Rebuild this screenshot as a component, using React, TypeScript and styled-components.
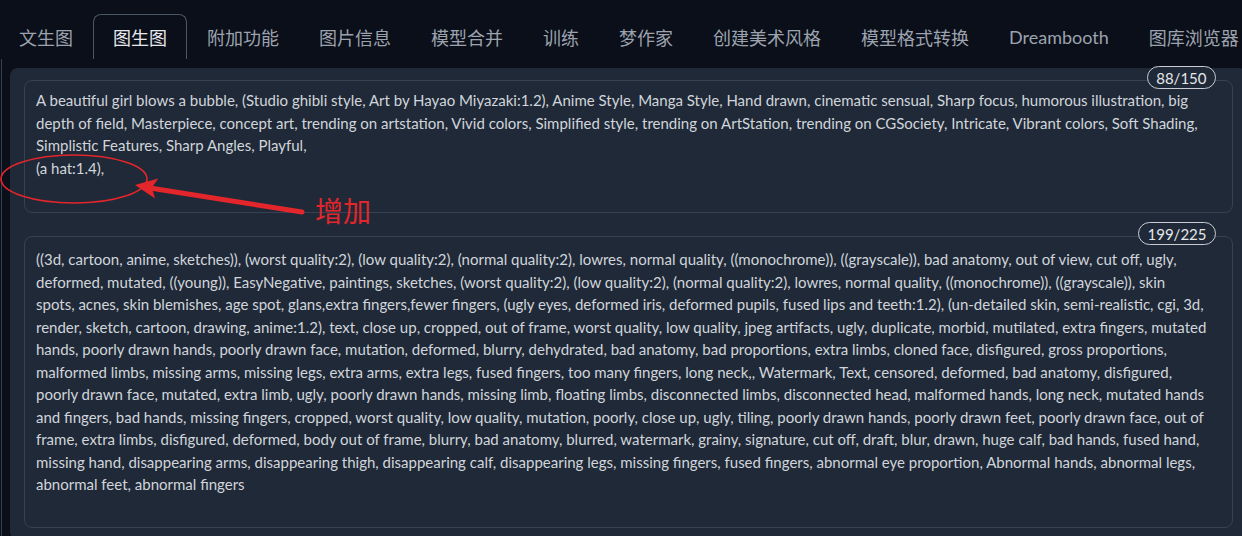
import * as React from 'react'
import styled, { createGlobalStyle } from 'styled-components'

const GlobalStyle = createGlobalStyle`
  html, body {
    margin: 0;
    padding: 0;
    background-color: #0b0f19;
    overflow: hidden;
  }
  body {
    font-family: Lato, "Noto Sans CJK SC", sans-serif;
  }
`

const Page = styled.div`
  position: relative;
  width: 1262px;
`

const TabNav = styled.div`
  display: flex;
  padding-top: 14px;
  margin-left: -1px;
  border-bottom: 1px solid #374151;
`

const TabButton = styled.button<{ $active?: boolean }>`
  height: 45px;
  margin-bottom: -1px;
  padding: 0 19px;
  font-family: Lato, "Noto Sans CJK SC", sans-serif;
  font-size: 18px;
  white-space: nowrap;
  color: ${(p) => (p.$active ? '#e5e7eb' : '#9ca3af')};
  background-color: #0b0f19;
  border: 1px solid ${(p) => (p.$active ? '#4b5563' : 'transparent')};
  border-bottom: none;
  border-radius: 8px 8px 0 0;
  cursor: pointer;
`

const TabContent = styled.div`
  margin-left: 1px;
  padding: 9px 0 0 8px;
  border-left: 1px solid #374151;
`

const Panel = styled.div`
  display: flex;
  flex-direction: column;
  gap: 23px;
  width: 1237px;
  padding: 12px 14px;
  box-sizing: border-box;
  background-color: #1f2937;
  border-radius: 8px;
`

const TextBlock = styled.div`
  position: relative;
`

const Counter = styled.span`
  position: absolute;
  top: -14px;
  right: 17px;
  height: 23px;
  padding: 0 8.5px;
  box-sizing: border-box;
  display: flex;
  align-items: center;
  font-size: 15px;
  color: #e5e7eb;
  background-color: #1f2937;
  border: 1px solid #c9cdd3;
  border-radius: 12px;
`

const PromptArea = styled.textarea<{ $height: number; $padTop: number }>`
  display: block;
  width: 100%;
  height: ${(p) => p.$height}px;
  box-sizing: border-box;
  padding: ${(p) => p.$padTop}px 11px 8px;
  font-family: Lato, "Noto Sans CJK SC", sans-serif;
  font-size: 15px;
  line-height: 22.5px;
  color: #d1d5db;
  background-color: #1f2937;
  border: 1px solid #374151;
  border-radius: 8px;
  resize: none;
  overflow: hidden;
  outline: none;
`

const Markup = styled.svg`
  position: absolute;
  left: 0;
  top: 0;
  pointer-events: none;
`

const MarkupLabel = styled.span`
  position: absolute;
  left: 315px;
  top: 196px;
  font-family: "Noto Sans CJK SC", sans-serif;
  font-size: 28px;
  line-height: 28px;
  color: #e3262b;
`

const tabs = [
  '文生图',
  '图生图',
  '附加功能',
  '图片信息',
  '模型合并',
  '训练',
  '梦作家',
  '创建美术风格',
  '模型格式转换',
  'Dreambooth',
  '图库浏览器',
]

const prompt = [
  'A beautiful girl blows a bubble, (Studio ghibli style, Art by Hayao Miyazaki:1.2), Anime Style, Manga Style, Hand drawn, cinematic sensual, Sharp focus, humorous illustration, big',
  'depth of field, Masterpiece, concept art, trending on artstation, Vivid colors, Simplified style, trending on ArtStation, trending on CGSociety, Intricate, Vibrant colors, Soft Shading,',
  'Simplistic Features, Sharp Angles, Playful,',
  '(a hat:1.4),',
].join('\n')

const negative = [
  '((3d, cartoon, anime, sketches)), (worst quality:2), (low quality:2), (normal quality:2), lowres, normal quality, ((monochrome)), ((grayscale)), bad anatomy, out of view, cut off, ugly,',
  'deformed, mutated, ((young)), EasyNegative, paintings, sketches, (worst quality:2), (low quality:2), (normal quality:2), lowres, normal quality, ((monochrome)), ((grayscale)), skin',
  'spots, acnes, skin blemishes, age spot, glans,extra fingers,fewer fingers, (ugly eyes, deformed iris, deformed pupils, fused lips and teeth:1.2), (un-detailed skin, semi-realistic, cgi, 3d,',
  'render, sketch, cartoon, drawing, anime:1.2), text, close up, cropped, out of frame, worst quality, low quality, jpeg artifacts, ugly, duplicate, morbid, mutilated, extra fingers, mutated',
  'hands, poorly drawn hands, poorly drawn face, mutation, deformed, blurry, dehydrated, bad anatomy, bad proportions, extra limbs, cloned face, disfigured, gross proportions,',
  'malformed limbs, missing arms, missing legs, extra arms, extra legs, fused fingers, too many fingers, long neck,, Watermark, Text, censored, deformed, bad anatomy, disfigured,',
  'poorly drawn face, mutated, extra limb, ugly, poorly drawn hands, missing limb, floating limbs, disconnected limbs, disconnected head, malformed hands, long neck, mutated hands',
  'and fingers, bad hands, missing fingers, cropped, worst quality, low quality, mutation, poorly, close up, ugly, tiling, poorly drawn hands, poorly drawn feet, poorly drawn face, out of',
  'frame, extra limbs, disfigured, deformed, body out of frame, blurry, bad anatomy, blurred, watermark, grainy, signature, cut off, draft, blur, drawn, huge calf, bad hands, fused hand,',
  'missing hand, disappearing arms, disappearing thigh, disappearing calf, disappearing legs, missing fingers, fused fingers, abnormal eye proportion, Abnormal hands, abnormal legs,',
  'abnormal feet, abnormal fingers',
].join('\n')

export default function App() {
  return (
    <>
      <GlobalStyle />
      <Page>
        <TabNav>
          {tabs.map((t) => (
            <TabButton key={t} $active={t === '图生图'}>
              {t}
            </TabButton>
          ))}
        </TabNav>
        <TabContent>
          <Panel>
            <TextBlock>
              <Counter>88/150</Counter>
              <PromptArea $height={133} $padTop={8} wrap="off" spellCheck={false} readOnly value={prompt} />
            </TextBlock>
            <TextBlock>
              <Counter>199/225</Counter>
              <PromptArea $height={292} $padTop={11} wrap="off" spellCheck={false} readOnly value={negative} />
            </TextBlock>
          </Panel>
        </TabContent>

        {/* red hand-drawn note over the first prompt */}
        <Markup width="320" height="230" viewBox="0 0 320 230">
          <ellipse cx="74" cy="179" rx="73" ry="24" fill="none" stroke="#e3262b" strokeWidth="1.6" />
          <line x1="302" y1="212" x2="150" y2="188" stroke="#e3262b" strokeWidth="5" strokeLinecap="round" />
          <polygon points="135,185 158.3,178.6 151.8,187.7 155.1,198.4" fill="#e3262b" />
        </Markup>
        <MarkupLabel>增加</MarkupLabel>
      </Page>
    </>
  )
}
